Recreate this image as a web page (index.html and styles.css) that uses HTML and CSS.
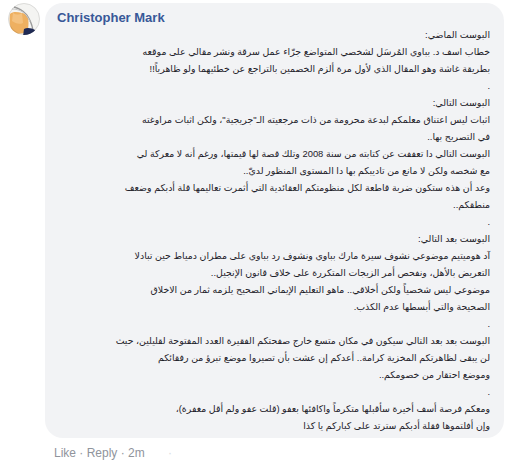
FILE: index.html
```html
<!DOCTYPE html>
<html lang="en">
<head>
<meta charset="UTF-8">
<meta name="viewport" content="width=device-width, initial-scale=1.0">
<title>Comment</title>
<link rel="stylesheet" href="styles.css">
</head>
<body>

<div class="comment">
    <div class="avatar">
        <svg width="32" height="32" viewBox="0 0 32 32">
            <defs>
                <clipPath id="avatarClip"><circle cx="16" cy="16" r="16"/></clipPath>
            </defs>
            <g clip-path="url(#avatarClip)">
                <rect width="32" height="32" fill="#f4f4f2"/>
                <path d="M2 11 C5 8 10 9 14 10 L19 11 C21 16 21 24 19 30 L4 31 C2 24 1 17 2 11 Z" fill="#eeb061"/>
                <path d="M5 10 C8 12 11 12 14 10 L15 20 C11 22 7 20 4 18 Z" fill="#f6c98c" opacity="0.7"/>
                <path d="M6 4 C14 6 22 12 25 27" stroke="#9a9a9a" stroke-width="1.3" fill="none"/>
                <path d="M4 6 C12 6 19 10 22 19" stroke="#c9c9c9" stroke-width="1" fill="none"/>
                <path d="M16 26 C19 24 24 25 27 27 L25 33 L15 33 Z" fill="#1f2a55"/>
            </g>
            <circle cx="16" cy="16" r="15.5" fill="none" stroke="rgba(0,0,0,0.1)"/>
        </svg>
    </div>
    <div class="comment-body">
        <div class="bubble">
            <a class="author" href="#">Christopher Mark</a>
            <div class="comment-text" dir="rtl">
                <div class="line">البوست الماضي:</div>
                <div class="line">خطاب اسف د. بباوي المُرسَل لشخصي المتواضع جرّاء عمل سرقة ونشر مقالي على موقعه</div>
                <div class="line">بطريقة غاشة وهو المقال الذي لأول مرة ألزم الخصمين بالتراجع عن خطئيهما ولو ظاهرياً!!</div>
                <div class="line">.</div>
                <div class="line">البوست التالي:</div>
                <div class="line">اثبات ليس اعتناق معلمكم لبدعة محرومة من ذات مرجعيته الـ"جريجية"، ولكن اثبات مراوغته</div>
                <div class="line">في التصريح بها..</div>
                <div class="line">البوست التالي دا تعففت عن كتابته من سنة 2008 وتلك قصة لها قيمتها، ورغم أنه لا معركة لي</div>
                <div class="line">مع شخصه ولكن لا مانع من تاديبكم بها دا المستوى المنظور لديّ..</div>
                <div class="line">وعد أن هذه ستكون ضربة قاطعة لكل منظومتكم العقائدية التي أثمرت تعاليمها قلة أدبكم وضعف</div>
                <div class="line">منطقكم..</div>
                <div class="line">.</div>
                <div class="line">البوست بعد التالي:</div>
                <div class="line">آد هوميتيم موضوعي نشوف سيرة مارك بباوي ونشوف رد بباوي على مطران دمياط حين تبادلا</div>
                <div class="line">التعريض بالأهل، ونفحص أمر الزيجات المتكررة على خلاف قانون الإنجيل..</div>
                <div class="line">موضوعي ليس شخصياً ولكن أخلاقي.. ماهو التعليم الإيماني الصحيح يلزمه ثمار من الاخلاق</div>
                <div class="line">الصحيحة والتي أبسطها عدم الكذب.</div>
                <div class="line">.</div>
                <div class="line">البوست بعد بعد التالي سيكون في مكان متسع خارج صفحتكم الفقيرة العدد المفتوحة لقليلين، حيث</div>
                <div class="line">لن يبقى لظاهرتكم المخزية كرامة.. أعدكم إن عشت بأن تصيروا موضع تبرؤ من رفقائكم</div>
                <div class="line">وموضع احتقار من خصومكم..</div>
                <div class="line">.</div>
                <div class="line">ومعكم فرصة أسف أخيرة سأقبلها متكرماً واكافئها بعفو (قلت عفو ولم أقل مغفرة)،</div>
                <div class="line">وإن أفلتموها فقلة أدبكم سترتد على كباركم يا كذا</div>
            </div>
        </div>
        <div class="actions">
            <a href="#">Like</a> · <a href="#">Reply</a> · <span>2m</span>
            <span class="faint">·</span>
        </div>
    </div>
</div>

</body>
</html>
```

FILE: styles.css
```css
body {
    font-family: "Liberation Sans", "DejaVu Sans", Arial, sans-serif;
    background-color: #fff;
    margin: 0;
    color: #1c1e21;
}
.comment {
    display: flex;
    gap: 5px;
    padding: 3px 5px 0 8px;
}
.avatar {
    width: 32px;
    height: 32px;
    flex: none;
}
.avatar svg {
    display: block;
}
.comment-body {
    flex: 1;
    min-width: 0;
}
.bubble {
    background-color: #f2f3f5;
    border-radius: 18px;
    padding: 7px 14px 4px 12px;
}
.author {
    display: block;
    font-size: 13px;
    font-weight: bold;
    line-height: 16px;
    color: #385898;
    text-decoration: none;
}
.comment-text {
    font-size: 9.4px;
    line-height: 17px;
    text-align: right;
    color: #1d2129;
}
.line {
    white-space: nowrap;
}
.actions {
    margin: 7px 0 0 9px;
    font-size: 12px;
    line-height: 16px;
    color: #90949c;
}
.actions a {
    color: #90949c;
    text-decoration: none;
}
.faint {
    margin-left: 20px;
    color: #dadde1;
}
```
